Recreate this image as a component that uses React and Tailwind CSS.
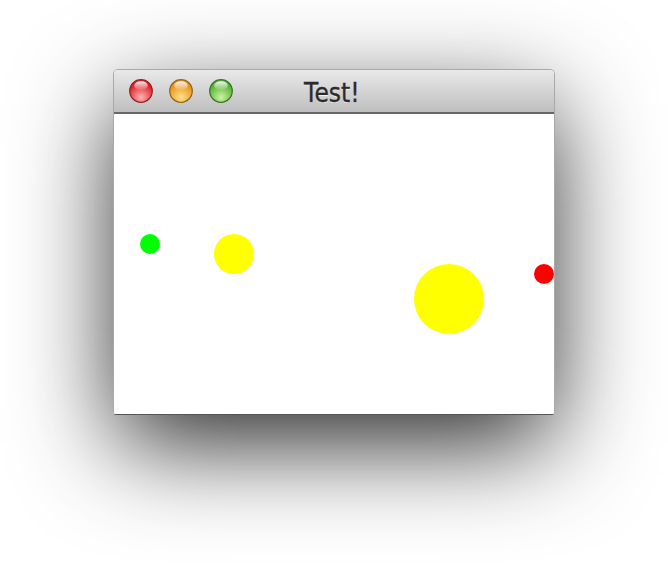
import React from "react"

const Light = ({ id, base, dark, light }) => (
  <svg width="24" height="24" viewBox="0 0 24 24">
    <defs>
      <radialGradient id={`g-${id}`} cx="50%" cy="78%" r="62%">
        <stop offset="0%" stopColor={light} />
        <stop offset="100%" stopColor={base} />
      </radialGradient>
      <linearGradient id={`h-${id}`} x1="0" y1="0" x2="0" y2="1">
        <stop offset="0%" stopColor="#ffffff" stopOpacity="0.95" />
        <stop offset="100%" stopColor="#ffffff" stopOpacity="0.05" />
      </linearGradient>
    </defs>
    <circle cx="12" cy="12" r="11.3" fill={`url(#g-${id})`} stroke={dark} strokeWidth="1.2" />
    <ellipse cx="12" cy="6.6" rx="6.8" ry="4.4" fill={`url(#h-${id})`} />
  </svg>
)

const dots = [
  { left: "left-[26px]", top: "top-[120px]", size: "w-[20px] h-[20px]", color: "bg-[#00ff00]" },
  { left: "left-[100px]", top: "top-[120px]", size: "w-[40px] h-[40px]", color: "bg-[#ffff00]" },
  { left: "left-[300px]", top: "top-[150px]", size: "w-[70px] h-[70px]", color: "bg-[#ffff00]" },
  { left: "left-[420px]", top: "top-[150px]", size: "w-[20px] h-[20px]", color: "bg-[#ff0000]" },
]

export default function App() {
  return (
    <div className="w-[668px] h-[572px] bg-white overflow-hidden pt-[69px] pl-[113px]">
      <div className="w-[442px] rounded-t-[5px] rounded-b-[3px] border border-[#a9a9a9] border-b-[#555] shadow-[0_32px_100px_-4px_rgba(0,0,0,0.85)] overflow-hidden">
        <div className="relative h-[44px] bg-gradient-to-b from-[#e9e9e9] to-[#bfbfbf] border-b-2 border-[#666] flex items-center pl-[15px] gap-[16px]">
          <Light id="r" base="#df1f26" dark="#8f2424" light="#ffb4b4" />
          <Light id="o" base="#e8921a" dark="#94641a" light="#ffe28a" />
          <Light id="g" base="#55b232" dark="#3a7426" light="#ccf2a4" />
          <div className="absolute inset-0 flex items-center justify-center pr-[4px] pt-[3px] pointer-events-none">
            <span className="inline-block scale-x-[0.9] font-['DejaVu_Sans',sans-serif] text-[26px] leading-none text-[#2a2a2a] [-webkit-text-stroke:0.35px_#2a2a2a] [text-shadow:0_1px_0_rgba(255,255,255,0.75)]">
              Test!
            </span>
          </div>
        </div>
        <div className="relative h-[300px] bg-white">
          {dots.map((d, i) => (
            <div key={i} className={`absolute rounded-full ${d.left} ${d.top} ${d.size} ${d.color}`} />
          ))}
        </div>
      </div>
    </div>
  )
}
